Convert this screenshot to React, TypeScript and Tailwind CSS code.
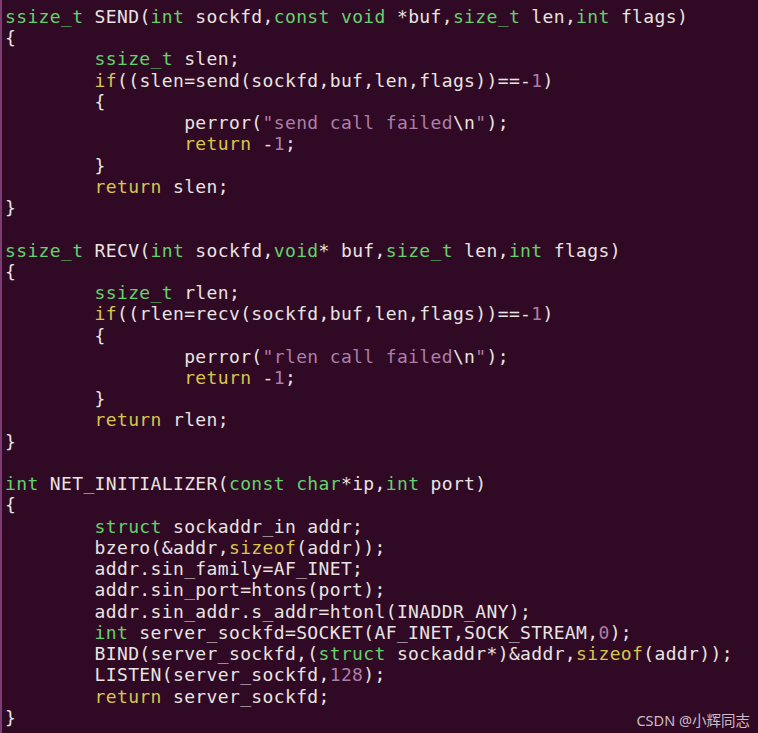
type Tok = [string, string];

// colour keys: d = plain, g = type, y = keyword, p = literal
const C: Record<string, string> = {
  d: 'text-[#e8e4e2]',
  g: 'text-[#62d36c]',
  y: 'text-[#d8c64c]',
  p: 'text-[#ad7fa8]',
};

const T = '\t';

const lines: Tok[][] = [
  [['g', 'ssize_t'], ['d', ' SEND('], ['g', 'int'], ['d', ' sockfd,'], ['g', 'const void'], ['d', ' *buf,'], ['g', 'size_t'], ['d', ' len,'], ['g', 'int'], ['d', ' flags)']],
  [['d', '{']],
  [['d', T], ['g', 'ssize_t'], ['d', ' slen;']],
  [['d', T], ['y', 'if'], ['d', '((slen=send(sockfd,buf,len,flags))==-'], ['p', '1'], ['d', ')']],
  [['d', T + '{']],
  [['d', T + T + 'perror('], ['p', '"send call failed'], ['d', '\\n'], ['p', '"'], ['d', ');']],
  [['d', T + T], ['y', 'return'], ['d', ' -'], ['p', '1'], ['d', ';']],
  [['d', T + '}']],
  [['d', T], ['y', 'return'], ['d', ' slen;']],
  [['d', '}']],
  [],
  [['g', 'ssize_t'], ['d', ' RECV('], ['g', 'int'], ['d', ' sockfd,'], ['g', 'void'], ['d', '* buf,'], ['g', 'size_t'], ['d', ' len,'], ['g', 'int'], ['d', ' flags)']],
  [['d', '{']],
  [['d', T], ['g', 'ssize_t'], ['d', ' rlen;']],
  [['d', T], ['y', 'if'], ['d', '((rlen=recv(sockfd,buf,len,flags))==-'], ['p', '1'], ['d', ')']],
  [['d', T + '{']],
  [['d', T + T + 'perror('], ['p', '"rlen call failed'], ['d', '\\n'], ['p', '"'], ['d', ');']],
  [['d', T + T], ['y', 'return'], ['d', ' -'], ['p', '1'], ['d', ';']],
  [['d', T + '}']],
  [['d', T], ['y', 'return'], ['d', ' rlen;']],
  [['d', '}']],
  [],
  [['g', 'int'], ['d', ' NET_INITIALIZER('], ['g', 'const char'], ['d', '*ip,'], ['g', 'int'], ['d', ' port)']],
  [['d', '{']],
  [['d', T], ['g', 'struct'], ['d', ' sockaddr_in addr;']],
  [['d', T + 'bzero(&addr,'], ['y', 'sizeof'], ['d', '(addr));']],
  [['d', T + 'addr.sin_family=AF_INET;']],
  [['d', T + 'addr.sin_port=htons(port);']],
  [['d', T + 'addr.sin_addr.s_addr=htonl(INADDR_ANY);']],
  [['d', T], ['g', 'int'], ['d', ' server_sockfd=SOCKET(AF_INET,SOCK_STREAM,'], ['p', '0'], ['d', ');']],
  [['d', T + 'BIND(server_sockfd,('], ['g', 'struct'], ['d', ' sockaddr*)&addr,'], ['y', 'sizeof'], ['d', '(addr));']],
  [['d', T + 'LISTEN(server_sockfd,'], ['p', '128'], ['d', ');']],
  [['d', T], ['y', 'return'], ['d', ' server_sockfd;']],
  [['d', '}']],
];

export default function App() {
  return (
    <div className="relative h-[733px] w-[758px] overflow-hidden bg-[#300a24]">
      <div className="h-full border-l-2 border-[#7d3d73] pl-[3px] pt-[6px]">
        <pre className="font-['DejaVu_Sans_Mono',monospace] text-[18px] leading-[21.24px] tracking-[0.36px] [tab-size:8]">
          {lines.map((line, i) => (
            <div key={i} className="h-[21.24px] whitespace-pre">
              {line.map(([c, s], j) => (
                <span key={j} className={C[c]}>
                  {s}
                </span>
              ))}
            </div>
          ))}
        </pre>
      </div>

      {/* watermark */}
      <div className="absolute right-[8px] bottom-[6px] font-['Noto_Sans','Noto_Sans_CJK_SC',sans-serif] text-[14.5px] leading-none text-[#cbbcc7]">
        CSDN @小辉同志
      </div>
    </div>
  );
}
